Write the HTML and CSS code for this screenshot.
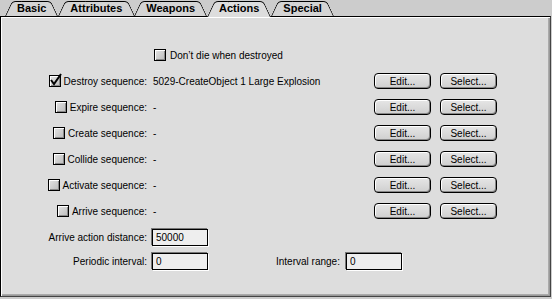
FILE: index.html
```html
<!DOCTYPE html>
<html lang="en">
<head>
  <meta charset="UTF-8" />
  <title>Actions</title>
  <link rel="stylesheet" href="styles.css">
</head>
<body>
  <div class="tabs">
    <div class="tab">Basic</div>
    <div class="tab">Attributes</div>
    <div class="tab">Weapons</div>
    <div class="tab active">Actions</div>
    <div class="tab">Special</div>
  </div>

  <div class="panel">
    <div class="form">
      <div></div>
      <div class="wide"><span class="box"></span><span class="check-text">Don’t die when destroyed</span></div>

      <div class="label"><span class="box checked"><svg width="16" height="16" viewBox="0 0 16 16"><path d="M3 7 L6 11 L13 1" fill="none" stroke="#000" stroke-width="2"/></svg></span>Destroy sequence:</div>
      <div class="value">5029-CreateObject 1 Large Explosion</div>
      <button class="btn">Edit...</button>
      <button class="btn">Select...</button>

      <div class="label"><span class="box"></span>Expire sequence:</div>
      <div class="value">-</div>
      <button class="btn">Edit...</button>
      <button class="btn">Select...</button>

      <div class="label"><span class="box"></span>Create sequence:</div>
      <div class="value">-</div>
      <button class="btn">Edit...</button>
      <button class="btn">Select...</button>

      <div class="label"><span class="box"></span>Collide sequence:</div>
      <div class="value">-</div>
      <button class="btn">Edit...</button>
      <button class="btn">Select...</button>

      <div class="label"><span class="box"></span>Activate sequence:</div>
      <div class="value">-</div>
      <button class="btn">Edit...</button>
      <button class="btn">Select...</button>

      <div class="label"><span class="box"></span>Arrive sequence:</div>
      <div class="value">-</div>
      <button class="btn">Edit...</button>
      <button class="btn">Select...</button>

      <div class="label">Arrive action distance:</div>
      <div class="wide"><input class="field" type="text" value="50000"></div>

      <div class="label">Periodic interval:</div>
      <div class="wide">
        <input class="field" type="text" value="0">
        <span class="range-label">Interval range:</span>
        <input class="field" type="text" value="0">
      </div>
    </div>
  </div>
</body>
</html>
```

FILE: styles.css
```css
:root {
  --outer-bg: #cccccc;
  --panel-bg: #dddddd;
  --tab-bg: #d4d4d4;
  --field-bg: #eeeeee;
}

body {
  margin: 0;
  background: var(--outer-bg);
  font-family: 'Liberation Sans', Arial, sans-serif;
  font-size: 10px;
  color: #000;
  width: 552px;
  height: 299px;
  overflow: hidden;
}

/* onglets */
.tabs {
  display: flex;
  align-items: flex-end;
  height: 16px;
  padding-left: 5px;
  position: relative;
  z-index: 1;
}

.tab {
  position: relative;
  z-index: 0;
  height: 15px;
  line-height: 15px;
  padding: 0 12px;
  font-weight: bold;
  font-size: 11px;
}

.tab::before,
.tab::after {
  content: "";
  position: absolute;
  top: 0;
  bottom: 0;
  width: 55%;
  background: var(--tab-bg);
  border-top: 1px solid #000;
  z-index: -1;
}

.tab::before {
  left: 0;
  border-left: 1px solid #000;
  border-top-left-radius: 4px;
  transform-origin: bottom left;
  transform: skewX(-25deg);
}

.tab::after {
  right: 0;
  border-right: 1px solid #000;
  border-top-right-radius: 4px;
  transform-origin: bottom right;
  transform: skewX(25deg);
}

.tab.active {
  height: 16px;
  margin-bottom: -1px;
  line-height: 15px;
}

.tab.active::before,
.tab.active::after {
  background: var(--panel-bg);
}

/* panneau */
.panel {
  width: 551px;
  height: 281px;
  box-sizing: border-box;
  background: var(--panel-bg);
  border: 1px solid #000;
  border-right-color: #444;
  border-bottom-color: #444;
  box-shadow: inset 1px 1px #fff, inset -1px -1px #999, inset -2px -2px #aaa;
}

.form {
  display: grid;
  grid-template-columns: 151px 222px 66px 58px;
  grid-template-rows: repeat(8, 26px) 22px;
  align-items: center;
  padding-top: 25px;
}

.label {
  display: flex;
  align-items: center;
  justify-content: flex-end;
  padding-right: 5px;
  white-space: nowrap;
}

.value {
  white-space: nowrap;
  padding-left: 1px;
}

.wide {
  grid-column: 2 / 5;
  display: flex;
  align-items: center;
}

.check-text {
  margin-left: 4px;
}

/* cases à cocher */
.box {
  position: relative;
  display: inline-block;
  width: 12px;
  height: 12px;
  box-sizing: border-box;
  border: 1px solid #000;
  background: linear-gradient(135deg, #e4e4e4, #bbbbbb);
  box-shadow: inset 1px 1px #fff, inset -1px -1px #888;
  margin-right: 3px;
  flex: none;
}

.wide .box {
  margin-left: 2px;
  margin-right: 0;
}

.box svg {
  position: absolute;
  left: -2px;
  top: -3px;
}

/* boutons */
.btn {
  width: 57px;
  height: 16px;
  padding: 0;
  box-sizing: border-box;
  border: 1px solid #000;
  border-radius: 4px;
  background: linear-gradient(#e6e6e6, #cfcfcf);
  box-shadow: inset 1px 1px #fff, inset -1px -1px #888;
  font-family: 'Liberation Sans', Arial, sans-serif;
  font-size: 10px;
  color: #000;
}

/* champs */
.field {
  width: 56px;
  height: 17px;
  box-sizing: border-box;
  border: 1px solid #000;
  box-shadow: -1px -1px #777, 1px 1px #fff;
  background: var(--field-bg);
  padding: 0 0 0 3px;
  font-family: 'Liberation Sans', Arial, sans-serif;
  font-size: 10px;
  margin: 0;
}

.range-label {
  margin-left: 68px;
  margin-right: 6px;
}
```
